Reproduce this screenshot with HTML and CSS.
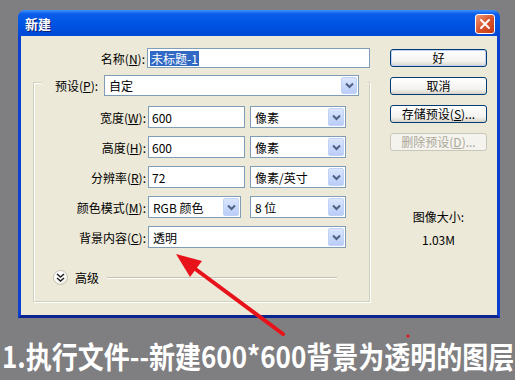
FILE: index.html
```html
<!DOCTYPE html>
<html lang="zh-CN">
<head>
    <meta charset="UTF-8">
    <meta name="viewport" content="width=device-width, initial-scale=1.0">
    <title>新建</title>
    <link rel="stylesheet" href="styles.css">
</head>
<body>
    <div class="window">
        <div class="titlebar">
            <span class="title">新建</span>
            <span class="close">
                <svg width="12" height="12" viewBox="0 0 12 12"><path d="M2 2 L10 10 M10 2 L2 10" stroke="#fff" stroke-width="2" stroke-linecap="round"/></svg>
            </span>
        </div>
        <div class="client">
            <div class="main">
                <div class="name-row">
                    <label class="lbl">名称(<u>N</u>):</label>
                    <div class="field name"><span class="sel">未标题-1</span></div>
                </div>
                <div class="group">
                    <div class="preset-row">
                        <label>预设(<u>P</u>):</label>
                        <div class="combo grow"><span>自定</span><i class="drop"><svg width="9" height="7" viewBox="0 0 9 7"><path d="M1 1.5 L4.5 5 L8 1.5" fill="none" stroke="#4d6185" stroke-width="2"/></svg></i></div>
                    </div>
                    <div class="rows">
                        <div class="row">
                            <label>宽度(<u>W</u>):</label>
                            <div class="field num">600</div>
                            <div class="combo unit"><span>像素</span><i class="drop"><svg width="9" height="7" viewBox="0 0 9 7"><path d="M1 1.5 L4.5 5 L8 1.5" fill="none" stroke="#4d6185" stroke-width="2"/></svg></i></div>
                        </div>
                        <div class="row">
                            <label>高度(<u>H</u>):</label>
                            <div class="field num">600</div>
                            <div class="combo unit"><span>像素</span><i class="drop"><svg width="9" height="7" viewBox="0 0 9 7"><path d="M1 1.5 L4.5 5 L8 1.5" fill="none" stroke="#4d6185" stroke-width="2"/></svg></i></div>
                        </div>
                        <div class="row">
                            <label>分辨率(<u>R</u>):</label>
                            <div class="field num">72</div>
                            <div class="combo unit"><span>像素/英寸</span><i class="drop"><svg width="9" height="7" viewBox="0 0 9 7"><path d="M1 1.5 L4.5 5 L8 1.5" fill="none" stroke="#4d6185" stroke-width="2"/></svg></i></div>
                        </div>
                        <div class="row">
                            <label>颜色模式(<u>M</u>):</label>
                            <div class="combo mode"><span>RGB 颜色</span><i class="drop"><svg width="9" height="7" viewBox="0 0 9 7"><path d="M1 1.5 L4.5 5 L8 1.5" fill="none" stroke="#4d6185" stroke-width="2"/></svg></i></div>
                            <div class="combo bits"><span>8 位</span><i class="drop"><svg width="9" height="7" viewBox="0 0 9 7"><path d="M1 1.5 L4.5 5 L8 1.5" fill="none" stroke="#4d6185" stroke-width="2"/></svg></i></div>
                        </div>
                        <div class="row">
                            <label>背景内容(<u>C</u>):</label>
                            <div class="combo wide"><span>透明</span><i class="drop"><svg width="9" height="7" viewBox="0 0 9 7"><path d="M1 1.5 L4.5 5 L8 1.5" fill="none" stroke="#4d6185" stroke-width="2"/></svg></i></div>
                        </div>
                    </div>
                    <div class="advanced">
                        <span class="toggle">
                            <svg width="9" height="9" viewBox="0 0 9 9"><path d="M1 1 L4.5 4 L8 1 M1 5 L4.5 8 L8 5" fill="none" stroke="#222" stroke-width="1.6"/></svg>
                        </span>
                        <span class="adv-text">高级</span>
                        <span class="line"></span>
                    </div>
                </div>
            </div>
            <div class="side">
                <div class="btn default">好</div>
                <div class="btn">取消</div>
                <div class="btn">存储预设(<u>S</u>)...</div>
                <div class="btn disabled">删除预设(<u>D</u>)...</div>
                <div class="info">
                    <p>图像大小:</p>
                    <p>1.03M</p>
                </div>
            </div>
        </div>
    </div>
    <div class="caption"><span>1.执行文件--新建600*600背景为透明的图层</span></div>

    <svg class="mark" width="515" height="380" viewBox="0 0 515 380">
        <line x1="283" y1="334" x2="194" y2="268" stroke="#e8131a" stroke-width="4" stroke-linecap="round"/>
        <polygon points="176,254 190,277 202,261" fill="#e8131a"/>
        <circle cx="408" cy="336" r="1.6" fill="#e8131a"/>
    </svg>
</body>
</html>
```

FILE: styles.css
```css
* {
    margin: 0;
    padding: 0;
    box-sizing: border-box;
}
body {
    background: #7f7e80;
    width: 515px;
    height: 380px;
    overflow: hidden;
    position: relative;
    font-family: "Noto Sans CJK SC", sans-serif;
    font-size: 12px;
    color: #000;
}
u {
    text-decoration: underline;
    text-underline-offset: 1px;
}
.window {
    margin: 10px 0 0 18px;
    width: 482px;
}
.titlebar {
    height: 26px;
    border-radius: 7px 7px 0 0;
    background: linear-gradient(#3d93ff 0, #0a5de8 4px, #0055e5 50%, #0047d6 100%);
    display: flex;
    align-items: center;
    justify-content: space-between;
    padding: 0 5px 0 7px;
}
.title {
    color: #fff;
    font-weight: bold;
    font-size: 13px;
    text-shadow: 1px 1px 0 #0a1e6e;
}
.close {
    width: 20px;
    height: 20px;
    margin-top: 2px;
    border: 1px solid #fff;
    border-radius: 3px;
    background: linear-gradient(135deg, #ec9a78, #d9552d 50%, #c13815);
    display: flex;
    align-items: center;
    justify-content: center;
}
.client {
    display: flex;
    height: 282px;
    background: #ece9d8;
    border: 3px solid #0b3fd0;
    border-top: 0;
    border-bottom-color: #0a2490;
}
.main {
    width: 349px;
    padding: 12px 0 0 12px;
}
.name-row {
    display: flex;
    align-items: center;
    height: 20px;
}
.name-row label {
    width: 115px;
    padding-right: 2px;
    text-align: right;
}
.field {
    height: 100%;
    background: #fff;
    border: 1px solid #7f9db9;
    padding-left: 3px;
    display: flex;
    align-items: center;
}
.field.name {
    width: 225px;
    padding-left: 2px;
}
.sel {
    background: #316ac5;
    color: #fff;
    line-height: 15px;
    padding: 0 1px;
}
.group {
    margin-top: 14px;
    width: 337px;
    height: 220px;
    border: 1px solid #d0d0bf;
    box-shadow: inset 1px 1px 0 #fff, 1px 1px 0 #fff;
}
.preset-row {
    display: flex;
    align-items: center;
    margin: -8px 0 0 8px;
    width: 325px;
    height: 21px;
    padding: 0 8px 0 13px;
    background: #ece9d8;
    gap: 4px;
}
.preset-row label {
    width: 45px;
    white-space: nowrap;
}
.combo {
    height: 100%;
    display: flex;
    background: #fff;
    border: 1px solid #7f9db9;
}
.combo span {
    flex: 1;
    padding-left: 4px;
    display: flex;
    align-items: center;
    white-space: nowrap;
}
.combo.grow {
    flex: 1;
}
.drop {
    width: 16px;
    margin: 1px;
    border: 1px solid #c0d2f8;
    border-radius: 2px;
    background: linear-gradient(#dbe6fe, #b9cdf8);
    display: flex;
    align-items: center;
    justify-content: center;
}
.rows {
    margin-top: 10px;
    display: flex;
    flex-direction: column;
    gap: 8px;
}
.row {
    display: flex;
    align-items: center;
    height: 22px;
}
.row label {
    width: 114px;
    padding-right: 2px;
    text-align: right;
    white-space: nowrap;
}
.field.num {
    width: 97px;
}
.combo.unit {
    width: 96px;
    margin-left: 5px;
}
.combo.mode {
    width: 93px;
}
.combo.bits {
    width: 96px;
    margin-left: 9px;
}
.combo.wide {
    width: 198px;
}
.advanced {
    margin-top: 22px;
    height: 15px;
    display: flex;
    align-items: center;
    padding: 0 32px 0 19px;
}
.toggle {
    width: 15px;
    height: 15px;
    border-radius: 50%;
    border: 1px solid #c5c2b2;
    background: radial-gradient(circle at 40% 35%, #fff 40%, #e3e1d6);
    display: flex;
    align-items: center;
    justify-content: center;
}
.adv-text {
    margin-left: 7px;
}
.line {
    flex: 1;
    height: 1px;
    margin-left: 8px;
    background: #c5c2b2;
    box-shadow: 0 1px 0 #fff;
}
.side {
    width: 97px;
    margin-left: 20px;
    padding-top: 13px;
}
.btn {
    height: 18px;
    margin-bottom: 10px;
    border: 1px solid #003c74;
    border-radius: 3px;
    background: linear-gradient(#fff, #f3f2ee 70%, #d8d3c8);
    text-align: center;
    line-height: 16px;
    white-space: nowrap;
}
.btn.default {
    box-shadow: inset 0 0 0 1px #c0d2f8;
}
.btn.disabled {
    color: #aca899;
    border-color: #c9c7ba;
    background: #f4f3ee;
}
.info {
    margin-top: 58px;
    text-align: center;
    line-height: 16px;
}
.info p + p {
    margin-top: 7px;
}
.caption {
    margin: 20px 0 0 2px;
    height: 34px;
    line-height: 34px;
    white-space: nowrap;
}
.caption span {
    display: inline-block;
    color: #fff;
    font-size: 26px;
    font-weight: bold;
    transform: scaleY(1.14);
}
.mark {
    position: absolute;
    left: 0;
    top: 0;
    pointer-events: none;
}
```
